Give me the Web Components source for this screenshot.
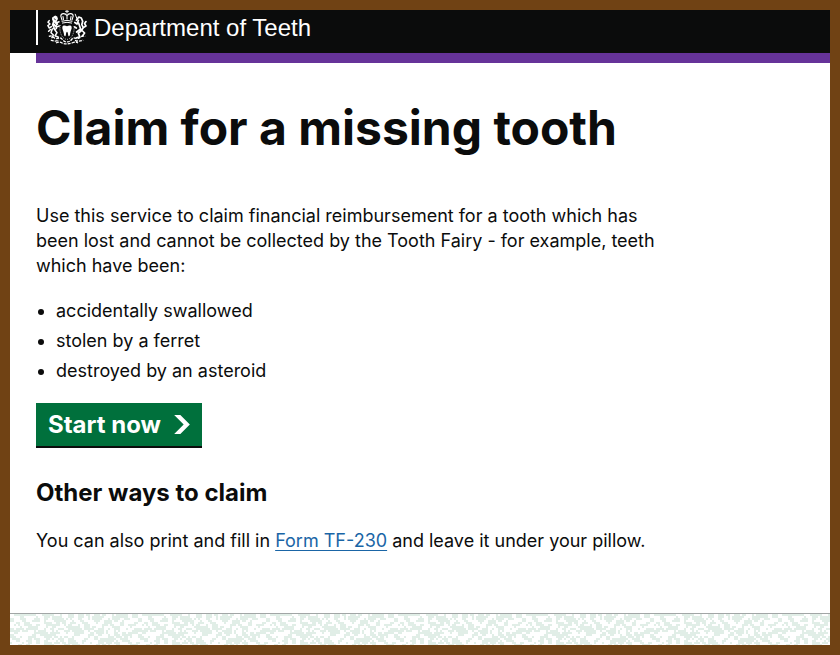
<!DOCTYPE html>
<html lang="en"><head><meta charset="utf-8"><title>Claim for a missing tooth</title>
<style>
html{background:#704214}
body{margin:0;min-height:100vh;box-sizing:border-box;padding:10px;display:flex;font-family:Inter,"Liberation Sans",sans-serif;color:#0b0c0c}
</style></head><body>
<service-page>
<department-header slot="header">Department of Teeth</department-header>
<claim-content></claim-content>
<textured-footer slot="footer"></textured-footer>
</service-page>
<script>
class ServicePage extends HTMLElement{
constructor(){super();this.attachShadow({mode:"open"}).innerHTML=`
<style>:host{flex:1;min-width:0;display:flex;flex-direction:column;background:#fff}main{flex:1}</style>
<slot name="header"></slot><main><slot></slot></main><slot name="footer"></slot>`}}
customElements.define("service-page",ServicePage);

class RoyalCrest extends HTMLElement{
constructor(){super();this.attachShadow({mode:"open"}).innerHTML=`
<style>:host{display:block;line-height:0}</style>
<svg width="40" height="35" viewBox="0 0 40 35" fill="none" stroke="#fff" stroke-linecap="round" stroke-linejoin="round" aria-hidden="true">
<path d="M20 0V3M18.5 1.3H21.5" stroke-width="1"/>
<path d="M15 10L13.8 6.2Q13.8 3.8 16.3 3.6Q18.5 3.4 20 5.6Q21.5 3.4 23.7 3.6Q26.2 3.8 26.2 6.2L25 10M16.5 9.5L16 6.5M23.5 9.5L24 6.5M20 5V9" stroke-width="1.1"/>
<path d="M15 11.2Q20 9.4 25 11.2M15.4 13Q20 11.5 24.6 13" stroke-width="1"/>
<path d="M15.4 16.8C15.8 15 18.5 15.2 20 16.3C21.5 15.2 24.2 15 24.6 16.8C25.1 18.8 23.6 20.7 23.2 23.3C22.9 27 21.3 27.6 21 23.7Q20.6 21.8 20 21.8Q19.4 21.8 19 23.7C18.7 27.6 17.1 27 16.8 23.3C16.4 20.7 14.9 18.8 15.4 16.8Z" fill="#fff" stroke="none"/>
<path d="M13.3 15Q12 21.5 15.2 26.4Q17.3 29.2 20 29.4Q22.7 29.2 24.8 26.4Q28 21.5 26.7 15" stroke-width=".8" stroke-dasharray="1 1.2" stroke-linecap="butt"/>
<path d="M6.5 6.6L8.2 5.4L10.2 6.5L11 9L9.6 11.2L11.4 14.3L9.8 15.4L10.3 18.4L8.5 20.2L6.3 17.5L4.7 15L5.8 11.6L5 9Z" fill="#fff" stroke="none"/>
<path d="M9 13L12 11.8M9.4 17L12.3 16M6.5 18L10 22.7L8 25.8L11.4 27.2M5.3 19L4 22.8L6.4 25L5 27.6M4.4 16.6L2.2 18L.9 15.6L3 14L1 12.2L2.2 10.6M1.6 21.3L3.5 19.5M6.8 10.2L5.8 8" stroke-width="1.5"/>
<path d="M7.2 8.8L8.4 9.6M7.4 13.2L8.6 14.4M7.6 17L8.6 18" stroke="#0b0c0c" stroke-width=".8"/>
<path d="M30.3 9.5L28.2 4.2" stroke-width="1"/>
<path d="M29.4 10.3L31.8 7L34.3 8L35.7 11.3L34.8 14.5L36.3 17.8L34 21L31.3 23.2L32.8 26.8L29.5 27.7M31.4 10.5L30 14L27.8 12.5M31.6 13L32.6 16L33.6 19L29.6 22M35 20.5L37.6 23L35.4 26M36.4 17.6L39 16L37.6 13.6L39 11.6M29.3 18L27.7 17" stroke-width="1.7"/>
<path d="M1.8 26.4Q4.7 25.2 6.8 27.6Q9 29.3 12 28.2Q14 27.5 15.4 29.5Q17.3 32 20 31.9Q22.7 32 24.6 29.5Q26 27.5 28 28.2Q31 29.3 33.2 27.6Q35.3 25.2 38.2 26.4M3.8 30.2Q8 31.8 12 30.3M9 33Q12 31.2 15 33Q20 34.8 25 33M28 30.3Q32 31.8 36.2 30.2M25 33Q28 31.2 31 33" stroke-width="1.3" stroke-dasharray="3 1" stroke-linecap="butt"/>
</svg>`}}
customElements.define("royal-crest",RoyalCrest);

class DepartmentHeader extends HTMLElement{
constructor(){super();this.attachShadow({mode:"open"}).innerHTML=`
<style>:host{display:block}header{background:#0b0c0c;padding:0 0 8px 26px}
.brand{display:flex;height:35px;border-left:2px solid #fff;padding-left:9px;gap:7px}
.name{font:24px/36px "Liberation Sans",Arial,sans-serif;color:#fff}
.stripe{height:10px;background:#663399;margin-left:26px}</style>
<header><div class="brand"><royal-crest></royal-crest><span class="name"><slot></slot></span></div></header><div class="stripe"></div>`}}
customElements.define("department-header",DepartmentHeader);

class StartButton extends HTMLElement{
constructor(){super();this.attachShadow({mode:"open"}).innerHTML=`
<style>:host{display:block}button{display:flex;align-items:center;gap:13px;height:43px;padding:0 12px;border:0;border-radius:0;background:#00703c;color:#fff;box-shadow:0 2px 0 #0b0c0c;font:bold 24px/24px Inter,sans-serif;cursor:pointer}</style>
<button type="button"><slot></slot><svg width="16" height="19" viewBox="0 0 33 40" aria-hidden="true"><path fill="#fff" d="M0 0h13l20 20-20 20H0l20-20z"/></svg></button>`}}
customElements.define("start-button",StartButton);

class ClaimContent extends HTMLElement{
constructor(){super();this.attachShadow({mode:"open"}).innerHTML=`
<style>:host{display:block;padding:40px 26px;max-width:640px;font-size:18px;line-height:25px}
h1{font-size:48px;line-height:50px;margin:0 0 50px}p{margin:0 0 20px}
ul{margin:0 0 20px;padding-left:20px}li{margin-bottom:5px}
h2{font-size:24px;line-height:30px;margin:32px 0 20px}
a{color:#1a65a6;text-decoration-thickness:1px;text-underline-offset:3px}</style>
<h1>Claim for a missing tooth</h1>
<p>Use this service to claim financial reimbursement for a tooth which has been lost and cannot be collected by the Tooth Fairy - for example, teeth which have been:</p>
<ul><li>accidentally swallowed</li><li>stolen by a ferret</li><li>destroyed by an asteroid</li></ul>
<start-button>Start now</start-button>
<h2>Other ways to claim</h2>
<p>You can also print and fill in <a href="#form">Form TF-230</a> and leave it under your pillow.</p>`}}
customElements.define("claim-content",ClaimContent);

class TexturedFooter extends HTMLElement{
constructor(){super();
const W=64,H=16;let s=7;
const rnd=()=>{s=(s+0x6D2B79F5)|0;let t=Math.imul(s^(s>>>15),1|s);t=(t+Math.imul(t^(t>>>7),61|t))^t;return((t^(t>>>14))>>>0)/4294967296};
const n=Array.from({length:H},()=>Array.from({length:W},rnd));
const at=(x,y)=>n[(y+H)%H][(x+W)%W];let d="";
for(let y=0;y<H;y++)for(let x=0;x<W;x++){
const v=at(x,y)+at(x+1,y)+at(x,y+1)+at(x+1,y+1)-(at(x+3,y)+at(x-2,y)+at(x,y+3)+at(x,y-2))*.5;
if(v>1.02)d+=`M${x*2} ${y*2}h2v2h-2z`}
this.attachShadow({mode:"open"}).innerHTML=`
<style>:host{display:block}footer{border-top:1px solid #a2a6a6}svg{display:block}</style>
<footer><svg width="100%" height="31" aria-hidden="true"><defs><pattern id="texture" width="128" height="32" patternUnits="userSpaceOnUse"><path fill="#e1eee7" shape-rendering="crispEdges" d="${d}"/></pattern></defs><rect width="100%" height="31" fill="url(#texture)"/></svg></footer>`}}
customElements.define("textured-footer",TexturedFooter);
</script></body></html>
